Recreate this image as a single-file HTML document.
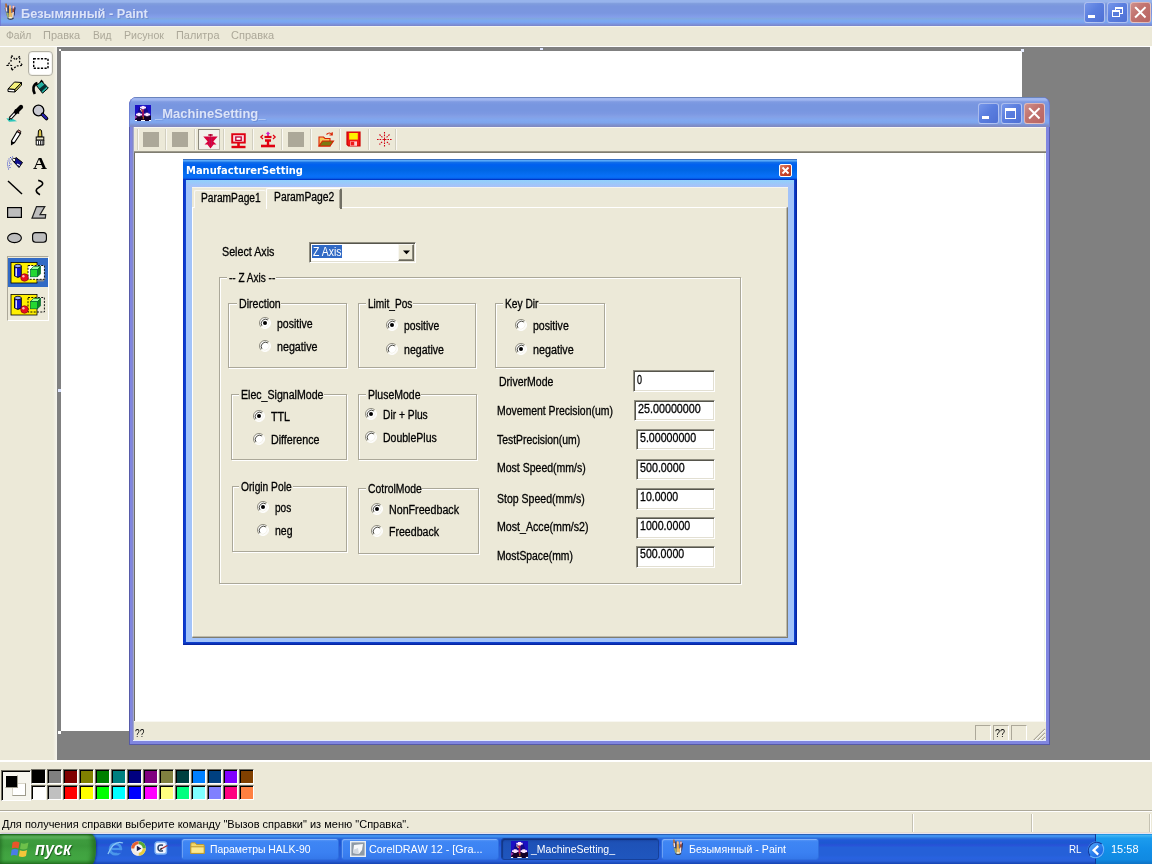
<!DOCTYPE html>
<html lang="ru"><head><meta charset="utf-8"><title>Paint</title><style>
html,body{margin:0;padding:0}
body{width:1152px;height:864px;overflow:hidden;background:#ECE9D8;position:relative;font-family:"Liberation Sans","DejaVu Sans",sans-serif}
div{position:absolute;box-sizing:border-box}
svg{position:absolute;overflow:visible}
.t{position:absolute;white-space:nowrap;line-height:16px;transform-origin:0 0}
#scr{left:0;top:0;width:1152px;height:864px;overflow:hidden;will-change:transform}
</style></head>
<body>
<div id="scr">
<div style="left:0px;top:0px;width:1152px;height:26px;background:linear-gradient(to bottom,#98B4EC 0,#98B4EC 8%,#809DDD 14%,#7A96DE 24%,#7A96E0 50%,#849FEA 66%,#80A8DE 72%,#7AA8F4 80%,#7AA4F0 86%,#7C96E0 92%,#7A84C8 100%)"></div>
<div style="left:0px;top:0px;width:1px;height:26px;background:#6C74D4;opacity:.7"></div><svg width="12" height="17" viewBox="0 0 12 17" style="left:3.6px;top:2.8px"><path d="M0.5 5 H11.5 L9.8 15.5 Q6.5 17.2 3.6 15.5 Z" fill="#5A6A9A"/><path d="M1.2 0.8 Q2.2 -.4 2.8 1 L3.6 7.5 H1.6 Z" fill="#B8682C"/><path d="M1.6 4.6 H3.2 L3.6 8.5 H2 Z" fill="#E8E0E8"/><path d="M3.4 2.5 L4.8 2.5 L5 12 L3.6 12 Z" fill="#1E3060"/><path d="M5 3 Q6 1.5 7 3 L7.4 13.5 H4.8 Z" fill="#F2B040"/><path d="M5.2 3.2 Q6 2 6.8 3.2 L6.9 5.5 H5.2 Z" fill="#F0B8A0"/><path d="M8.6 3 Q9.6 1.8 10.4 3.2 L10 11 H8.4 Z" fill="#B04826"/><path d="M8.7 3.2 Q9.6 2 10.3 3.3 L10.2 5.6 H8.6 Z" fill="#F0C8D0"/><path d="M10.5 4 L11.5 4.5 L10.5 12.5 L9.8 12.5 Z" fill="#202858"/><path d="M2 9.5 L4.6 10 L4.8 15 L3.4 14.6 Z" fill="#9CB070"/><path d="M5 10 H9 L8.6 15 H5.2 Z" fill="#E8B868"/><path d="M8.6 9 L9.8 9 L9.4 14.5 L8.4 14.5 Z" fill="#F4F0F0"/><path d="M3.6 15 Q6.5 16.4 9.6 15 L9.4 16 Q6.5 17.4 3.8 16 Z" fill="#28303C"/><path d="M4.6 14.2 Q6.4 13.4 8 14.2 L8 15.2 Q6.4 15.8 4.6 15.2 Z" fill="#F0F0D0"/></svg>
<span class="t" style="left:21.4px;top:5.5px;color:#DCE4F8;font-family:'Liberation Sans', 'DejaVu Sans', sans-serif;font-size:13px;font-weight:bold;transform:scaleX(0.9793);text-shadow:1px 1px 0 rgba(60,80,160,.25);">Безымянный - Paint</span>
<div style="left:1084px;top:2px;width:21px;height:21px;border-radius:3px;border:1px solid rgba(255,255,255,.5);background:linear-gradient(135deg,#7696EA 0,#5A7EDF 45%,#4F70D4 100%);box-shadow:0 0 0 0 #000"><div style="left:3px;top:12px;width:7px;height:3px;background:#fff"></div></div>
<div style="left:1107px;top:2px;width:21px;height:21px;border-radius:3px;border:1px solid rgba(255,255,255,.5);background:linear-gradient(135deg,#7696EA 0,#5A7EDF 45%,#4F70D4 100%);box-shadow:0 0 0 0 #000"><div style="left:7px;top:4px;width:8px;height:7px;border:1px solid #fff;border-top:2px solid #fff"></div>
<div style="left:4px;top:7px;width:8px;height:7px;border:1px solid #fff;border-top:2px solid #fff;background:#587CDC"></div></div>
<div style="left:1130px;top:2px;width:21px;height:21px;border-radius:3px;border:1px solid rgba(255,255,255,.5);background:linear-gradient(135deg,#CE908C 0,#C27470 40%,#B86462 100%);box-shadow:0 0 0 0 #000"><svg width="19" height="19" style="left:0;top:0"><path d="M4.8 4.8 L13.8 13.8 M13.8 4.8 L4.8 13.8" stroke="#fff" stroke-width="2" stroke-linecap="square" fill="none"/></svg>
</div>
<div style="left:0px;top:26px;width:1152px;height:20px;background:#ECE9D8"></div>
<div style="left:0px;top:26px;width:1152px;height:1px;background:#F3F5EF"></div><span class="t" style="left:5.6px;top:27px;color:#ACA899;font-family:'Liberation Sans', 'DejaVu Sans', sans-serif;font-size:11px;transform:scaleX(0.9391);">Файл</span>
<span class="t" style="left:43px;top:27px;color:#ACA899;font-family:'Liberation Sans', 'DejaVu Sans', sans-serif;font-size:11px;">Правка</span>
<span class="t" style="left:92.5px;top:27px;color:#ACA899;font-family:'Liberation Sans', 'DejaVu Sans', sans-serif;font-size:11px;transform:scaleX(0.9294);">Вид</span>
<span class="t" style="left:124px;top:27px;color:#ACA899;font-family:'Liberation Sans', 'DejaVu Sans', sans-serif;font-size:11px;transform:scaleX(0.9639);">Рисунок</span>
<span class="t" style="left:176px;top:27px;color:#ACA899;font-family:'Liberation Sans', 'DejaVu Sans', sans-serif;font-size:11px;transform:scaleX(0.9915);">Палитра</span>
<span class="t" style="left:231px;top:27px;color:#ACA899;font-family:'Liberation Sans', 'DejaVu Sans', sans-serif;font-size:11px;">Справка</span>
<div style="left:0px;top:46px;width:1152px;height:1px;background:#fff"></div>
<div style="left:0px;top:47px;width:57px;height:713px;background:#ECE9D8"></div>
<div style="left:57px;top:47px;width:1093px;height:713px;background:#808080"></div>
<div style="left:1150px;top:47px;width:2px;height:713px;background:#fff"></div>
<div style="left:53px;top:47px;width:4px;height:713px;background:linear-gradient(to right,#ECE9D8,#F6F5EE)"></div>
<div style="left:61px;top:51px;width:961px;height:680px;background:#fff"></div>
<div style="left:1021px;top:49px;width:3px;height:3px;background:#e8eeff"></div>
<div style="left:59px;top:49px;width:2px;height:2px;background:#fff"></div>
<div style="left:58px;top:731px;width:3px;height:3px;background:#fff"></div>
<div style="left:540px;top:48px;width:3px;height:2px;background:#dfe6ff"></div>
<div style="left:58px;top:389px;width:3px;height:3px;background:#dfe6ff"></div>
<div style="left:28px;top:51px;width:25px;height:25px;background:#fff;border:1px solid #B4B2A6;border-radius:4px;box-shadow:inset 0 0 0 1px #F4F3EE"></div><svg width="16" height="17" viewBox="0 0 16 17" style="left:7px;top:54px"><path d="M4.6 1.3 L8.3 5.9 L12.9 2.2 L12.5 8 L15.7 11.4 L9.5 12 L4.6 16.5 L4.5 11.5 L0.3 11.4 L4 7 Z" fill="none" stroke="#000" stroke-width="1.25" stroke-dasharray="1.8 1.5"/></svg>
<svg width="16" height="11" viewBox="0 0 16 11" style="left:33px;top:58px"><rect x=".7" y=".7" width="14.3" height="9.6" fill="none" stroke="#000" stroke-width="1.4" stroke-dasharray="2.2 1.4"/></svg>
<svg width="16" height="12" viewBox="0 0 16 12" style="left:7px;top:81px"><path d="M1 8 L7.5 1 L14.5 1.5 L8 8.5 Z" fill="#F4F27C" stroke="#000" stroke-width="1"/><path d="M1 8 L8 8.5 L8 11 L1 10.5 Z" fill="#fff" stroke="#000" stroke-width="1"/><path d="M8 8.5 L14.5 1.5 L14.5 4 L8 11 Z" fill="#E2DF62" stroke="#000" stroke-width="1"/></svg>
<svg width="17" height="15" viewBox="0 0 17 15" style="left:32px;top:80px"><path d="M2.8 14 C0.3 9 1 4.5 5.5 3" fill="none" stroke="#000" stroke-width="2.6"/><path d="M4.5 5.5 L9.5 1.2 L16.3 8 L10.5 13.2 Z" fill="#22B0A2" stroke="#000" stroke-width="1"/><path d="M7 9 L13 4 L15 6.5 L9.5 11.5 Z" fill="#042E30"/><path d="M8 2.5 L9.5 0.3 L11.5 2.5" fill="none" stroke="#000" stroke-width="1.1"/></svg>
<svg width="18" height="17" viewBox="0 0 18 17" style="left:6px;top:105px"><path d="M0.3 13.2 L6 13.5 L11 16.3 L3 16.8 Z" fill="#2CC6BA"/><path d="M4 13.5 L11 6" stroke="#000" stroke-width="3.4"/><path d="M4.3 13.2 L10.5 6.5" stroke="#fff" stroke-width="1.4"/><path d="M10 7 L15 2" stroke="#000" stroke-width="4.2" stroke-linecap="round"/><path d="M9 4.5 L13 8.5" stroke="#000" stroke-width="1.6"/><path d="M3 14.8 L4.5 13" stroke="#000" stroke-width="1.2"/></svg>
<svg width="17" height="17" viewBox="0 0 17 17" style="left:32px;top:104px"><circle cx="6.5" cy="6.5" r="5.3" fill="#C9C9D0" stroke="#000" stroke-width="1.3"/><path d="M10.5 10.5 L14.5 14.5" stroke="#000" stroke-width="3.6" stroke-linecap="round"/><path d="M10.8 10.8 L14.3 14.3" stroke="#2520B0" stroke-width="2" stroke-linecap="round"/></svg>
<svg width="12" height="17" viewBox="0 0 12 17" style="left:10px;top:129px"><path d="M7 2.5 L10.5 4.5 L4.5 13.5 L1.5 15.5 L1.5 12 Z" fill="#fff" stroke="#000" stroke-width="1.1"/><path d="M1.5 12 L4.5 13.5 L1.5 15.8 Z" fill="#000"/><path d="M7.3 2.3 L8.3 .8 L11 2.5 L10.3 4.2 Z" fill="#E09088" stroke="#000" stroke-width=".8"/></svg>
<svg width="10" height="17" viewBox="0 0 10 17" style="left:35px;top:129px"><path d="M3.5 1.5 Q5 -.5 6.5 1.5 L7 8 H3 Z" fill="#D8C24A" stroke="#000" stroke-width="1"/><rect x="1.2" y="8" width="7.6" height="3.2" fill="#E8E4C8" stroke="#000" stroke-width="1"/><path d="M1.2 11.2 H8.8 V16 H1.2 Z" fill="#fff" stroke="#000" stroke-width="1"/><path d="M3.5 12 V16 M5.5 12 V16 M7.2 12 V16" stroke="#000" stroke-width=".8"/></svg>
<svg width="18" height="15" viewBox="0 0 18 15" style="left:6px;top:155px"><path d="M7 6 L10 2.5 L16.5 7.5 L13 12.5 Z" fill="#10108C" stroke="#000" stroke-width="1"/><path d="M6 4.5 L8 3 L10 5 L8 7 Z" fill="#fff" stroke="#000" stroke-width=".8"/><path d="M11 9 L14 10.5" stroke="#fff" stroke-width="1.2"/><g fill="#3A4AD0"><rect x="4" y="2" width="1" height="1"/><rect x="2.5" y="3.5" width="1" height="1"/><rect x="5" y="3.5" width="1" height="1"/><rect x="1.5" y="5.5" width="1" height="1"/><rect x="3.5" y="5.5" width="1" height="1"/><rect x="1" y="7.5" width="1" height="1"/><rect x="3" y="7.5" width="1" height="1"/><rect x="4.5" y="8.5" width="1" height="1"/><rect x="1" y="9.5" width="1" height="1"/><rect x="2.8" y="10" width="1" height="1"/><rect x="1.5" y="11.5" width="1" height="1"/><rect x="3.5" y="12" width="1" height="1"/><rect x="2" y="13.5" width="1" height="1"/><rect x="6" y="1.5" width="1" height="1"/></g></svg>
<span class="t" style="left:32.5px;top:154.6px;color:#000;font-family:'Liberation Serif', serif;font-size:17.5px;font-weight:bold;transform:scaleX(1.1075);">A</span>
<svg width="16" height="15" viewBox="0 0 16 15" style="left:7px;top:180px"><path d="M1 1 L15 14" stroke="#000" stroke-width="1.5"/></svg>
<svg width="10" height="16" viewBox="0 0 10 16" style="left:34px;top:180px"><path d="M4.2 .4 C7 1 9.6 2.6 8.4 4.6 C7 7 2.2 8 2.2 10.3 C2.2 12.5 4 13.8 6 14.7" fill="none" stroke="#000" stroke-width="1.6"/></svg>
<svg width="15" height="11" viewBox="0 0 15 11" style="left:7px;top:207px"><rect x=".6" y=".6" width="13.8" height="9.8" fill="#BDBDBD" stroke="#000" stroke-width="1.2"/></svg>
<svg width="16" height="13" viewBox="0 0 16 13" style="left:31px;top:206px"><path d="M5.5 .6 H13.8 L9 8.6 H14.7 L14.3 12.2 H1 Z" fill="#BDBDBD" stroke="#222" stroke-width="1.2"/></svg>
<svg width="16" height="12" viewBox="0 0 16 12" style="left:7px;top:232px"><ellipse cx="7.5" cy="6" rx="6.9" ry="4.6" fill="#BDBDBD" stroke="#000" stroke-width="1.1"/></svg>
<svg width="15" height="11" viewBox="0 0 15 11" style="left:32px;top:232px"><rect x=".6" y=".6" width="13.8" height="9.6" rx="3" fill="#BDBDBD" stroke="#000" stroke-width="1.1"/></svg>
<div style="left:7px;top:256px;width:42px;height:65px;background:#ECE9D8;border-top:1px solid #ACA899;border-left:1px solid #ACA899;border-right:1px solid #fff;border-bottom:1px solid #fff"></div>
<div style="left:8px;top:258px;width:40px;height:29px;background:#316AC5"></div><svg width="36" height="24" viewBox="0 0 36 24" style="left:10px;top:261px"><rect x="1" y="1.5" width="26" height="20.5" fill="#FFEF00" stroke="#000" stroke-width=".8"/><path d="M4.5 5 V15 Q8 17.8 11.3 15 V5 Z" fill="#1414D0" stroke="#000" stroke-width=".9"/><ellipse cx="7.9" cy="5" rx="3.4" ry="1.7" fill="#9AA8FF" stroke="#000" stroke-width=".8"/><path d="M6.2 7.2 V15.3" stroke="#fff" stroke-width="1.3"/><path d="M30 17 L36 17 L33.5 20.5 L26 20.5 Z" fill="#8a8a8a"/><rect x="18" y="4.5" width="16.4" height="13.8" fill="#fff" stroke="#000" stroke-width=".9" stroke-dasharray="2 1.3"/><circle cx="14.5" cy="16.5" r="3.8" fill="#E81020" stroke="#7a0010" stroke-width=".6"/><circle cx="13.4" cy="15.2" r="1.2" fill="#FFB8B8"/><path d="M20.5 8.5 L23.5 5.5 H30.5 L27.5 8.5 Z" fill="#98FF98" stroke="#063" stroke-width=".7"/><path d="M27.5 8.5 L30.5 5.5 V12.8 L27.5 15.8 Z" fill="#0A8A1A" stroke="#063" stroke-width=".7"/><rect x="20.5" y="8.5" width="7" height="7.3" fill="#22D832" stroke="#063" stroke-width=".7"/></svg>
<svg width="36" height="24" viewBox="0 0 36 24" style="left:10px;top:293px"><rect x="1" y="1.5" width="26" height="20.5" fill="#FFEF00" stroke="#000" stroke-width=".8"/><path d="M4.5 5 V15 Q8 17.8 11.3 15 V5 Z" fill="#1414D0" stroke="#000" stroke-width=".9"/><ellipse cx="7.9" cy="5" rx="3.4" ry="1.7" fill="#9AA8FF" stroke="#000" stroke-width=".8"/><path d="M6.2 7.2 V15.3" stroke="#fff" stroke-width="1.3"/><rect x="18" y="4.5" width="16.4" height="14.5" fill="none" stroke="#000" stroke-width=".9" stroke-dasharray="2 1.3"/><circle cx="14.5" cy="16.5" r="3.8" fill="#E81020" stroke="#7a0010" stroke-width=".6"/><circle cx="13.4" cy="15.2" r="1.2" fill="#FFB8B8"/><path d="M20.5 8.5 L23.5 5.5 H30.5 L27.5 8.5 Z" fill="#98FF98" stroke="#063" stroke-width=".7"/><path d="M27.5 8.5 L30.5 5.5 V12.8 L27.5 15.8 Z" fill="#0A8A1A" stroke="#063" stroke-width=".7"/><rect x="20.5" y="8.5" width="7" height="7.3" fill="#22D832" stroke="#063" stroke-width=".7"/></svg>
<div style="left:129px;top:97px;width:921px;height:648px;background:#8086E0;border-radius:8px 8px 0 0;border:1px solid #565AA8;border-top:none"></div>
<div style="left:132px;top:127px;width:1px;height:614px;background:#8488CC"></div>
<div style="left:133px;top:127px;width:1px;height:614px;background:#A2A8D0"></div>
<div style="left:129px;top:97px;width:921px;height:30px;border-radius:8px 8px 0 0;background:linear-gradient(to bottom,#6A84BC 0,#6A84BC 3.3%,#A0B6F0 5%,#A0B6F0 10%,#7F9BE2 16%,#7896E0 26%,#7896E0 45%,#7C98E2 55%,#84A0E6 65%,#80A8F0 78%,#7EA4EC 86%,#7E90CC 94%,#8088C0 100%);border-left:1px solid #6C7FD2;border-right:1px solid #6C7FD2"></div><svg width="16" height="16" viewBox="0 0 16 16" style="left:135px;top:105px"><rect width="16" height="16" fill="#1A10C4"/><path d="M4.5 2 H11.5 L16 14 V16 H0 V14 Z" fill="#0E0658" opacity=".55"/><rect y="10.6" width="16" height="5.4" fill="#12001E" opacity=".92"/><path d="M0 10.5 L2.5 12 L0 14 Z" fill="#C040D0" opacity=".8"/><path d="M8 3.5 V12" stroke="#B01060" stroke-width="1.7"/><path d="M6.2 4.5 L7.6 7" stroke="#8A1030" stroke-width="1.4"/><path d="M8.3 11.5 V14.2" stroke="#C86410" stroke-width="1.1"/><g fill="#FFE6FF"><rect x="5" y="1.7" width="6" height="1.7"/><rect x="6.6" y=".9" width="2.9" height="3.3"/><rect x="1" y="8.7" width="6" height="1.7"/><rect x="2.5" y="7.8" width="2.9" height="3.4"/><rect x="9.1" y="8.7" width="6" height="1.7"/><rect x="10.6" y="7.8" width="2.9" height="3.4"/></g><rect x="5" y="4" width="1.2" height="1.2" fill="#FFE4C8"/><rect x="6.1" y="5.3" width="1.2" height="1.2" fill="#FFD890"/><g fill="#fff"><rect x="0" y="15" width="2" height="1"/><rect x="6" y="15" width="4" height="1"/><rect x="14" y="15" width="2" height="1"/></g></svg>
<span class="t" style="left:155px;top:106.3px;color:#DCE4F8;font-family:'Liberation Sans', 'DejaVu Sans', sans-serif;font-size:13px;font-weight:bold;text-shadow:1px 1px 0 rgba(60,80,160,.25);">_MachineSetting_</span>
<div style="left:978px;top:103px;width:21px;height:21px;border-radius:3px;border:1px solid rgba(255,255,255,.5);background:linear-gradient(135deg,#7696EA 0,#5A7EDF 45%,#4F70D4 100%);box-shadow:0 0 0 0 #000"><div style="left:3px;top:12px;width:7px;height:3px;background:#fff"></div></div>
<div style="left:1001px;top:103px;width:21px;height:21px;border-radius:3px;border:1px solid rgba(255,255,255,.5);background:linear-gradient(135deg,#7696EA 0,#5A7EDF 45%,#4F70D4 100%);box-shadow:0 0 0 0 #000"><div style="left:3px;top:4px;width:11px;height:11px;border:1px solid #fff;border-top:3px solid #fff"></div></div>
<div style="left:1024px;top:103px;width:21px;height:21px;border-radius:3px;border:1px solid rgba(255,255,255,.5);background:linear-gradient(135deg,#CE908C 0,#C27470 40%,#B86462 100%);box-shadow:0 0 0 0 #000"><svg width="19" height="19" style="left:0;top:0"><path d="M4.8 4.8 L13.8 13.8 M13.8 4.8 L4.8 13.8" stroke="#fff" stroke-width="2" stroke-linecap="square" fill="none"/></svg>
</div>
<div style="left:134px;top:127px;width:912px;height:25px;background:#ECE9D8"></div>
<div style="left:134px;top:127px;width:912px;height:1px;background:#F8F7F1"></div>
<div style="left:134px;top:151px;width:912px;height:2px;background:linear-gradient(#ACA899,#716F64)"></div>
<div style="left:137px;top:129px;width:1px;height:21px;background:#D2CFC0"></div>
<div style="left:138px;top:129px;width:1px;height:21px;background:#FAF9F4"></div>
<div style="left:165px;top:129px;width:1px;height:21px;background:#D2CFC0"></div>
<div style="left:166px;top:129px;width:1px;height:21px;background:#FAF9F4"></div>
<div style="left:194px;top:129px;width:1px;height:21px;background:#D2CFC0"></div>
<div style="left:195px;top:129px;width:1px;height:21px;background:#FAF9F4"></div>
<div style="left:223px;top:129px;width:1px;height:21px;background:#D2CFC0"></div>
<div style="left:224px;top:129px;width:1px;height:21px;background:#FAF9F4"></div>
<div style="left:252px;top:129px;width:1px;height:21px;background:#D2CFC0"></div>
<div style="left:253px;top:129px;width:1px;height:21px;background:#FAF9F4"></div>
<div style="left:281px;top:129px;width:1px;height:21px;background:#D2CFC0"></div>
<div style="left:282px;top:129px;width:1px;height:21px;background:#FAF9F4"></div>
<div style="left:310px;top:129px;width:1px;height:21px;background:#D2CFC0"></div>
<div style="left:311px;top:129px;width:1px;height:21px;background:#FAF9F4"></div>
<div style="left:339px;top:129px;width:1px;height:21px;background:#D2CFC0"></div>
<div style="left:340px;top:129px;width:1px;height:21px;background:#FAF9F4"></div>
<div style="left:368px;top:129px;width:1px;height:21px;background:#D2CFC0"></div>
<div style="left:369px;top:129px;width:1px;height:21px;background:#FAF9F4"></div>
<div style="left:395px;top:129px;width:1px;height:21px;background:#D2CFC0"></div>
<div style="left:396px;top:129px;width:1px;height:21px;background:#FAF9F4"></div>
<div style="left:143px;top:132px;width:16px;height:15px;background:#ACA899"></div>
<div style="left:172px;top:132px;width:16px;height:15px;background:#ACA899"></div>
<div style="left:288px;top:132px;width:16px;height:15px;background:#ACA899"></div>
<div style="left:198px;top:129px;width:22px;height:21px;background:#F3F2EC;border:1px solid #B9B6A8;border-top-color:#8C8A7E;border-left-color:#8C8A7E"></div><svg width="15" height="15" viewBox="0 0 15 15" style="left:203px;top:133.5px"><path d="M5.3 1 H9.7 M7.5 0 V2.6" stroke="#B00030" stroke-width="1.3"/><path d="M0.3 2.6 H14.7 L10.3 7.5 L13.5 10.6 H10.6 L7.5 14.6 L4.4 10.6 H1.5 L4.7 7.5 Z" fill="#D8003C"/><path d="M6.5 3.5 V12 M8.5 3.5 V12" stroke="#A03070" stroke-width=".8" stroke-dasharray="1 1"/></svg>
<svg width="15" height="16" viewBox="0 0 15 16" style="left:231px;top:132.6px"><rect x="1.2" y="1.2" width="12.6" height="8.4" fill="#F8D8E0" stroke="#E00010" stroke-width="1.9"/><rect x="4.8" y="4" width="5.4" height="3.4" fill="#fff" stroke="#C00030" stroke-width="1.3"/><path d="M7.5 10 V13" stroke="#E00010" stroke-width="2.6"/><path d="M0.5 14 H14.5" stroke="#E00010" stroke-width="2.4"/></svg>
<svg width="16" height="17" viewBox="0 0 16 17" style="left:260px;top:131px"><path d="M3 4 L0.8 6 L3 8 M13 4 L15.2 6 L13 8" fill="none" stroke="#E00010" stroke-width="1.2"/><path d="M8 .5 L5.8 3 H10.2 Z" fill="#D020C0"/><path d="M8 2.5 V7" stroke="#D020C0" stroke-width="1.8"/><path d="M4.5 6 H11.5" stroke="#E00010" stroke-width="2.2"/><path d="M5 9.5 H11 M8 9 V14" stroke="#E00010" stroke-width="2.4"/><path d="M1 15 H15" stroke="#E00010" stroke-width="2.6"/></svg>
<svg width="16" height="17" viewBox="0 0 16 17" style="left:318px;top:131px"><path d="M1 6 H5.5 L7 7.5 H12 V15 H1 Z" fill="#F6C860" stroke="#D82000" stroke-width="1.1"/><path d="M1 15 L4.5 10 H15.5 L12 15 Z" fill="#7A7A10" stroke="#D82000" stroke-width="1.1"/><path d="M8.5 3.5 Q11.5 0.5 14 3.5 M14.2 1.2 V4 H11.5" fill="none" stroke="#D82000" stroke-width="1.2"/></svg>
<svg width="15" height="16" viewBox="0 0 15 16" style="left:346px;top:131px"><path d="M1 1 H14 V15 H2.5 L1 13.5 Z" fill="#F01818" stroke="#D00000" stroke-width="1.2"/><rect x="3.2" y="2" width="8.6" height="6.6" fill="#FFF000"/><rect x="4" y="10.4" width="7" height="4.4" fill="#FFD0D0"/><rect x="4.6" y="10.8" width="3.6" height="3.6" fill="#F01818"/></svg>
<svg width="15" height="15" viewBox="0 0 15 15" style="left:377px;top:132px"><g stroke="#D00010" stroke-width="1.1" stroke-dasharray="1.6 1"><path d="M7.5 0 V15 M0 7.5 H15"/><path d="M2.5 2.5 L12.5 12.5 M12.5 2.5 L2.5 12.5"/></g><circle cx="7.5" cy="7.5" r="2.6" fill="#ECE9D8"/><path d="M7.5 5.5 V9.5 M5.5 7.5 H9.5" stroke="#D00010" stroke-width=".9"/></svg>
<div style="left:134px;top:153px;width:912px;height:568px;background:#ECE9D8"></div>
<div style="left:134px;top:153px;width:1px;height:568px;background:#716F64"></div>
<div style="left:135px;top:153px;width:909px;height:568px;background:#fff"></div>
<div style="left:134px;top:721px;width:912px;height:20px;background:#ECE9D8"></div>
<div style="left:134px;top:721px;width:912px;height:1px;background:#F8F7F1"></div><span class="t" style="left:135px;top:724.5px;color:#000;font-family:'Liberation Sans', 'DejaVu Sans', sans-serif;font-size:11px;transform:scaleX(0.7592);">??</span>
<div style="left:975px;top:725px;width:16px;height:16px;border-top:1px solid #ACA899;border-left:1px solid #ACA899;border-right:1px solid #fff"></div>
<div style="left:993px;top:725px;width:16px;height:16px;border-top:1px solid #ACA899;border-left:1px solid #ACA899;border-right:1px solid #fff"></div><span class="t" style="left:995px;top:724.5px;color:#000;font-family:'Liberation Sans', 'DejaVu Sans', sans-serif;font-size:11px;transform:scaleX(0.8163);">??</span>
<div style="left:1011px;top:725px;width:16px;height:16px;border-top:1px solid #ACA899;border-left:1px solid #ACA899;border-right:1px solid #fff"></div><svg width="13" height="13" viewBox="0 0 13 13" style="left:1032px;top:728px"><path d="M1 13 L13 1 M5 13 L13 5 M9 13 L13 9" stroke="#ACA899" stroke-width="1.3"/><path d="M2 13 L13 2 M6 13 L13 6 M10 13 L13 10" stroke="#fff" stroke-width=".8"/></svg>
<div style="left:133px;top:740px;width:913px;height:1px;background:#E4ECFF"></div>
<div style="left:1044px;top:153px;width:1px;height:568px;background:#ECF4E4"></div>
<div style="left:1045px;top:153px;width:1px;height:568px;background:#FAFFFF"></div>
<div style="left:183px;top:159px;width:614px;height:486px;background:#0A2FC2"></div>
<div style="left:183px;top:159px;width:614px;height:21px;background:linear-gradient(to bottom,#3A70C0 0,#3A70C0 4.8%,#58A8F8 5%,#58A8F8 9.5%,#1470E8 15%,#0060F0 27%,#0066E4 52%,#0870F8 82%,#0868F0 92%,#0038C8 95.2%,#0038C8 100%)"></div>
<div style="left:183px;top:180px;width:3px;height:465px;background:linear-gradient(to right,#0A2FC2,#0F46D6)"></div>
<div style="left:794px;top:180px;width:3px;height:465px;background:linear-gradient(to left,#061F9A,#0F46D6)"></div>
<div style="left:183px;top:642px;width:614px;height:3px;background:linear-gradient(to top,#061F9A,#0F46D6)"></div><span class="t" style="left:185.6px;top:163.2px;color:#fff;font-family:'DejaVu Sans', 'Liberation Sans', sans-serif;font-size:11px;font-weight:bold;transform:scaleX(0.9031);">ManufacturerSetting</span>
<div style="left:779px;top:164px;width:13px;height:13px;border:1px solid #fff;border-radius:2px;background:linear-gradient(135deg,#E08466 0,#C8432A 55%,#B03A1E 100%)"><svg width="11" height="11" style="left:0;top:0"><path d="M2.5 2.5 L8.5 8.5 M8.5 2.5 L2.5 8.5" stroke="#fff" stroke-width="1.9" fill="none"/></svg>
</div>
<div style="left:186px;top:180px;width:608px;height:462px;background:#A2C3F9"></div>
<div style="left:186px;top:180px;width:608px;height:7px;background:linear-gradient(to bottom,#90D0FC,#A8C0F8)"></div>
<div style="left:192px;top:187px;width:596px;height:451px;background:#ECE9D8"></div>
<div style="left:192px;top:187px;width:596px;height:1px;background:#F6F5F0"></div>
<div style="left:192px;top:207px;width:596px;height:431px;border-top:1px solid #fff;border-left:1px solid #fff;border-right:2px solid;border-right-color:#7E7C70;border-bottom:2px solid #7E7C70"></div>
<div style="left:193px;top:636px;width:593px;height:1px;background:#BDBAAB"></div>
<div style="left:786px;top:208px;width:1px;height:429px;background:#BDBAAB"></div>
<div style="left:194px;top:190px;width:72px;height:18px;border-top:1px solid #FAF9F5;border-left:1px solid #FAF9F5;border-radius:2px 2px 0 0;background:#ECE9D8"></div><span class="t" style="left:200.7px;top:190.3px;color:#000;font-family:'Liberation Sans', 'DejaVu Sans', sans-serif;font-size:12px;transform:scaleX(0.8523);-webkit-text-stroke:.3px #000;">ParamPage1</span>
<div style="left:266px;top:188px;width:76px;height:21px;background:#ECE9D8;border-top:1px solid #fff;border-left:1px solid #fff;border-right:2px solid #716F64;border-radius:2px 2px 0 0"></div>
<div style="left:339px;top:190px;width:1px;height:18px;background:#ACA899"></div><span class="t" style="left:273.7px;top:188.8px;color:#000;font-family:'Liberation Sans', 'DejaVu Sans', sans-serif;font-size:12px;transform:scaleX(0.8609);-webkit-text-stroke:.3px #000;">ParamPage2</span>
<span class="t" style="left:222px;top:244px;color:#000;font-family:'Liberation Sans', 'DejaVu Sans', sans-serif;font-size:12px;transform:scaleX(0.8926);-webkit-text-stroke:.3px #000;">Select Axis</span>
<div style="left:309px;top:242px;width:107px;height:21px;background:#fff;border:1px solid;border-color:#8F8D80 #fff #fff #8F8D80;box-shadow:inset 1px 1px 0 #56554C, inset -1px -1px 0 #E2DFD2"></div>
<div style="left:312px;top:245px;width:30px;height:13px;background:#316AC5"></div><span class="t" style="left:312.5px;top:244px;color:#fff;font-family:'Liberation Sans', 'DejaVu Sans', sans-serif;font-size:12px;transform:scaleX(0.8723);">Z Axis</span>
<div style="left:398px;top:244px;width:16px;height:17px;background:#ECE9D8;border:1px solid;border-color:#F8F7F2 #6A685C #6A685C #F8F7F2;box-shadow:inset -1px -1px 0 #8F8D80"><svg width="14" height="15" style="left:0;top:0"><path d="M4 5.6 H11 L7.5 9.3 Z" fill="#000"/></svg>
</div>
<div style="left:219px;top:277px;width:522px;height:307px;border:1px solid #ABA899;box-shadow:1px 1px 0 #fff, inset 1px 1px 0 #fff"></div>
<div style="left:226.75px;top:271px;width:49.25px;height:14px;background:#ECE9D8"></div><span class="t" style="left:228.75px;top:269.9px;color:#000;font-family:'Liberation Sans', 'DejaVu Sans', sans-serif;font-size:12px;transform:scaleX(0.8359);-webkit-text-stroke:.3px #000;">-- Z Axis --</span>
<div style="left:228px;top:303px;width:119px;height:65px;border:1px solid #ABA899;box-shadow:1px 1px 0 #fff, inset 1px 1px 0 #fff"></div>
<div style="left:236.5px;top:297px;width:44.75px;height:14px;background:#ECE9D8"></div><span class="t" style="left:238.5px;top:295.75px;color:#000;font-family:'Liberation Sans', 'DejaVu Sans', sans-serif;font-size:12px;transform:scaleX(0.8816);-webkit-text-stroke:.3px #000;">Direction</span>
<div style="left:358px;top:303px;width:118px;height:65px;border:1px solid #ABA899;box-shadow:1px 1px 0 #fff, inset 1px 1px 0 #fff"></div>
<div style="left:365.5px;top:297px;width:47.4px;height:14px;background:#ECE9D8"></div><span class="t" style="left:367.5px;top:295.75px;color:#000;font-family:'Liberation Sans', 'DejaVu Sans', sans-serif;font-size:12px;transform:scaleX(0.8427);-webkit-text-stroke:.3px #000;">Limit_Pos</span>
<div style="left:495px;top:303px;width:110px;height:65px;border:1px solid #ABA899;box-shadow:1px 1px 0 #fff, inset 1px 1px 0 #fff"></div>
<div style="left:502.5px;top:297px;width:36.4px;height:14px;background:#ECE9D8"></div><span class="t" style="left:504.5px;top:295.75px;color:#000;font-family:'Liberation Sans', 'DejaVu Sans', sans-serif;font-size:12px;transform:scaleX(0.8489);-webkit-text-stroke:.3px #000;">Key Dir</span>
<div style="left:231px;top:394px;width:116px;height:66px;border:1px solid #ABA899;box-shadow:1px 1px 0 #fff, inset 1px 1px 0 #fff"></div>
<div style="left:238.5px;top:388px;width:85.5px;height:14px;background:#ECE9D8"></div><span class="t" style="left:240.5px;top:387px;color:#000;font-family:'Liberation Sans', 'DejaVu Sans', sans-serif;font-size:12px;transform:scaleX(0.8832);-webkit-text-stroke:.3px #000;">Elec_SignalMode</span>
<div style="left:358px;top:394px;width:119px;height:66px;border:1px solid #ABA899;box-shadow:1px 1px 0 #fff, inset 1px 1px 0 #fff"></div>
<div style="left:365.5px;top:388px;width:55.5px;height:14px;background:#ECE9D8"></div><span class="t" style="left:367.5px;top:387px;color:#000;font-family:'Liberation Sans', 'DejaVu Sans', sans-serif;font-size:12px;transform:scaleX(0.8743);-webkit-text-stroke:.3px #000;">PluseMode</span>
<div style="left:232px;top:486px;width:115px;height:66px;border:1px solid #ABA899;box-shadow:1px 1px 0 #fff, inset 1px 1px 0 #fff"></div>
<div style="left:239.4px;top:480px;width:53.6px;height:14px;background:#ECE9D8"></div><span class="t" style="left:241.4px;top:478.75px;color:#000;font-family:'Liberation Sans', 'DejaVu Sans', sans-serif;font-size:12px;transform:scaleX(0.8522);-webkit-text-stroke:.3px #000;">Origin Pole</span>
<div style="left:358px;top:488px;width:121px;height:66px;border:1px solid #ABA899;box-shadow:1px 1px 0 #fff, inset 1px 1px 0 #fff"></div>
<div style="left:365.5px;top:482px;width:56.75px;height:14px;background:#ECE9D8"></div><span class="t" style="left:367.5px;top:480.5px;color:#000;font-family:'Liberation Sans', 'DejaVu Sans', sans-serif;font-size:12px;transform:scaleX(0.8665);-webkit-text-stroke:.3px #000;">CotrolMode</span>
<svg width="12" height="12" viewBox="0 0 12 12" style="left:259px;top:317px"><circle cx="6" cy="6" r="5.2" fill="#fff"/><path d="M2.1 9.9 A5.5 5.5 0 0 1 9.9 2.1" fill="none" stroke="#8E8C80" stroke-width="1"/><path d="M3 9 A4.3 4.3 0 0 1 9 3" fill="none" stroke="#4A4942" stroke-width="1"/><path d="M9.9 2.1 A5.5 5.5 0 0 1 2.1 9.9" fill="none" stroke="#fff" stroke-width="1"/><path d="M9.1 2.9 A4.4 4.4 0 0 1 2.9 9.1" fill="none" stroke="#F2F0E6" stroke-width=".9"/><circle cx="6" cy="6" r="2" fill="#000"/></svg>
<span class="t" style="left:276.5px;top:315.75px;color:#000;font-family:'Liberation Sans', 'DejaVu Sans', sans-serif;font-size:12px;transform:scaleX(0.8774);-webkit-text-stroke:.3px #000;">positive</span>
<svg width="12" height="12" viewBox="0 0 12 12" style="left:259px;top:340px"><circle cx="6" cy="6" r="5.2" fill="#fff"/><path d="M2.1 9.9 A5.5 5.5 0 0 1 9.9 2.1" fill="none" stroke="#8E8C80" stroke-width="1"/><path d="M3 9 A4.3 4.3 0 0 1 9 3" fill="none" stroke="#4A4942" stroke-width="1"/><path d="M9.9 2.1 A5.5 5.5 0 0 1 2.1 9.9" fill="none" stroke="#fff" stroke-width="1"/><path d="M9.1 2.9 A4.4 4.4 0 0 1 2.9 9.1" fill="none" stroke="#F2F0E6" stroke-width=".9"/></svg>
<span class="t" style="left:276.5px;top:338.6px;color:#000;font-family:'Liberation Sans', 'DejaVu Sans', sans-serif;font-size:12px;transform:scaleX(0.8926);-webkit-text-stroke:.3px #000;">negative</span>
<svg width="12" height="12" viewBox="0 0 12 12" style="left:386px;top:319px"><circle cx="6" cy="6" r="5.2" fill="#fff"/><path d="M2.1 9.9 A5.5 5.5 0 0 1 9.9 2.1" fill="none" stroke="#8E8C80" stroke-width="1"/><path d="M3 9 A4.3 4.3 0 0 1 9 3" fill="none" stroke="#4A4942" stroke-width="1"/><path d="M9.9 2.1 A5.5 5.5 0 0 1 2.1 9.9" fill="none" stroke="#fff" stroke-width="1"/><path d="M9.1 2.9 A4.4 4.4 0 0 1 2.9 9.1" fill="none" stroke="#F2F0E6" stroke-width=".9"/><circle cx="6" cy="6" r="2" fill="#000"/></svg>
<span class="t" style="left:403.75px;top:317.75px;color:#000;font-family:'Liberation Sans', 'DejaVu Sans', sans-serif;font-size:12px;transform:scaleX(0.8664);-webkit-text-stroke:.3px #000;">positive</span>
<svg width="12" height="12" viewBox="0 0 12 12" style="left:386px;top:343px"><circle cx="6" cy="6" r="5.2" fill="#fff"/><path d="M2.1 9.9 A5.5 5.5 0 0 1 9.9 2.1" fill="none" stroke="#8E8C80" stroke-width="1"/><path d="M3 9 A4.3 4.3 0 0 1 9 3" fill="none" stroke="#4A4942" stroke-width="1"/><path d="M9.9 2.1 A5.5 5.5 0 0 1 2.1 9.9" fill="none" stroke="#fff" stroke-width="1"/><path d="M9.1 2.9 A4.4 4.4 0 0 1 2.9 9.1" fill="none" stroke="#F2F0E6" stroke-width=".9"/></svg>
<span class="t" style="left:403.75px;top:341.5px;color:#000;font-family:'Liberation Sans', 'DejaVu Sans', sans-serif;font-size:12px;transform:scaleX(0.8815);-webkit-text-stroke:.3px #000;">negative</span>
<svg width="12" height="12" viewBox="0 0 12 12" style="left:515px;top:319px"><circle cx="6" cy="6" r="5.2" fill="#fff"/><path d="M2.1 9.9 A5.5 5.5 0 0 1 9.9 2.1" fill="none" stroke="#8E8C80" stroke-width="1"/><path d="M3 9 A4.3 4.3 0 0 1 9 3" fill="none" stroke="#4A4942" stroke-width="1"/><path d="M9.9 2.1 A5.5 5.5 0 0 1 2.1 9.9" fill="none" stroke="#fff" stroke-width="1"/><path d="M9.1 2.9 A4.4 4.4 0 0 1 2.9 9.1" fill="none" stroke="#F2F0E6" stroke-width=".9"/></svg>
<span class="t" style="left:532.5px;top:317.75px;color:#000;font-family:'Liberation Sans', 'DejaVu Sans', sans-serif;font-size:12px;transform:scaleX(0.8786);-webkit-text-stroke:.3px #000;">positive</span>
<svg width="12" height="12" viewBox="0 0 12 12" style="left:515px;top:343px"><circle cx="6" cy="6" r="5.2" fill="#fff"/><path d="M2.1 9.9 A5.5 5.5 0 0 1 9.9 2.1" fill="none" stroke="#8E8C80" stroke-width="1"/><path d="M3 9 A4.3 4.3 0 0 1 9 3" fill="none" stroke="#4A4942" stroke-width="1"/><path d="M9.9 2.1 A5.5 5.5 0 0 1 2.1 9.9" fill="none" stroke="#fff" stroke-width="1"/><path d="M9.1 2.9 A4.4 4.4 0 0 1 2.9 9.1" fill="none" stroke="#F2F0E6" stroke-width=".9"/><circle cx="6" cy="6" r="2" fill="#000"/></svg>
<span class="t" style="left:532.5px;top:341.5px;color:#000;font-family:'Liberation Sans', 'DejaVu Sans', sans-serif;font-size:12px;transform:scaleX(0.8981);-webkit-text-stroke:.3px #000;">negative</span>
<svg width="12" height="12" viewBox="0 0 12 12" style="left:253px;top:410px"><circle cx="6" cy="6" r="5.2" fill="#fff"/><path d="M2.1 9.9 A5.5 5.5 0 0 1 9.9 2.1" fill="none" stroke="#8E8C80" stroke-width="1"/><path d="M3 9 A4.3 4.3 0 0 1 9 3" fill="none" stroke="#4A4942" stroke-width="1"/><path d="M9.9 2.1 A5.5 5.5 0 0 1 2.1 9.9" fill="none" stroke="#fff" stroke-width="1"/><path d="M9.1 2.9 A4.4 4.4 0 0 1 2.9 9.1" fill="none" stroke="#F2F0E6" stroke-width=".9"/><circle cx="6" cy="6" r="2" fill="#000"/></svg>
<span class="t" style="left:271px;top:408.9px;color:#000;font-family:'Liberation Sans', 'DejaVu Sans', sans-serif;font-size:12px;transform:scaleX(0.8949);-webkit-text-stroke:.3px #000;">TTL</span>
<svg width="12" height="12" viewBox="0 0 12 12" style="left:253px;top:433px"><circle cx="6" cy="6" r="5.2" fill="#fff"/><path d="M2.1 9.9 A5.5 5.5 0 0 1 9.9 2.1" fill="none" stroke="#8E8C80" stroke-width="1"/><path d="M3 9 A4.3 4.3 0 0 1 9 3" fill="none" stroke="#4A4942" stroke-width="1"/><path d="M9.9 2.1 A5.5 5.5 0 0 1 2.1 9.9" fill="none" stroke="#fff" stroke-width="1"/><path d="M9.1 2.9 A4.4 4.4 0 0 1 2.9 9.1" fill="none" stroke="#F2F0E6" stroke-width=".9"/></svg>
<span class="t" style="left:270.75px;top:431.75px;color:#000;font-family:'Liberation Sans', 'DejaVu Sans', sans-serif;font-size:12px;transform:scaleX(0.8902);-webkit-text-stroke:.3px #000;">Difference</span>
<svg width="12" height="12" viewBox="0 0 12 12" style="left:365px;top:408px"><circle cx="6" cy="6" r="5.2" fill="#fff"/><path d="M2.1 9.9 A5.5 5.5 0 0 1 9.9 2.1" fill="none" stroke="#8E8C80" stroke-width="1"/><path d="M3 9 A4.3 4.3 0 0 1 9 3" fill="none" stroke="#4A4942" stroke-width="1"/><path d="M9.9 2.1 A5.5 5.5 0 0 1 2.1 9.9" fill="none" stroke="#fff" stroke-width="1"/><path d="M9.1 2.9 A4.4 4.4 0 0 1 2.9 9.1" fill="none" stroke="#F2F0E6" stroke-width=".9"/><circle cx="6" cy="6" r="2" fill="#000"/></svg>
<span class="t" style="left:382.5px;top:406.75px;color:#000;font-family:'Liberation Sans', 'DejaVu Sans', sans-serif;font-size:12px;transform:scaleX(0.8547);-webkit-text-stroke:.3px #000;">Dir + Plus</span>
<svg width="12" height="12" viewBox="0 0 12 12" style="left:365px;top:431px"><circle cx="6" cy="6" r="5.2" fill="#fff"/><path d="M2.1 9.9 A5.5 5.5 0 0 1 9.9 2.1" fill="none" stroke="#8E8C80" stroke-width="1"/><path d="M3 9 A4.3 4.3 0 0 1 9 3" fill="none" stroke="#4A4942" stroke-width="1"/><path d="M9.9 2.1 A5.5 5.5 0 0 1 2.1 9.9" fill="none" stroke="#fff" stroke-width="1"/><path d="M9.1 2.9 A4.4 4.4 0 0 1 2.9 9.1" fill="none" stroke="#F2F0E6" stroke-width=".9"/></svg>
<span class="t" style="left:382.5px;top:429.75px;color:#000;font-family:'Liberation Sans', 'DejaVu Sans', sans-serif;font-size:12px;transform:scaleX(0.8758);-webkit-text-stroke:.3px #000;">DoublePlus</span>
<svg width="12" height="12" viewBox="0 0 12 12" style="left:257px;top:501px"><circle cx="6" cy="6" r="5.2" fill="#fff"/><path d="M2.1 9.9 A5.5 5.5 0 0 1 9.9 2.1" fill="none" stroke="#8E8C80" stroke-width="1"/><path d="M3 9 A4.3 4.3 0 0 1 9 3" fill="none" stroke="#4A4942" stroke-width="1"/><path d="M9.9 2.1 A5.5 5.5 0 0 1 2.1 9.9" fill="none" stroke="#fff" stroke-width="1"/><path d="M9.1 2.9 A4.4 4.4 0 0 1 2.9 9.1" fill="none" stroke="#F2F0E6" stroke-width=".9"/><circle cx="6" cy="6" r="2" fill="#000"/></svg>
<span class="t" style="left:274.75px;top:499.6px;color:#000;font-family:'Liberation Sans', 'DejaVu Sans', sans-serif;font-size:12px;transform:scaleX(0.8394);-webkit-text-stroke:.3px #000;">pos</span>
<svg width="12" height="12" viewBox="0 0 12 12" style="left:257px;top:524px"><circle cx="6" cy="6" r="5.2" fill="#fff"/><path d="M2.1 9.9 A5.5 5.5 0 0 1 9.9 2.1" fill="none" stroke="#8E8C80" stroke-width="1"/><path d="M3 9 A4.3 4.3 0 0 1 9 3" fill="none" stroke="#4A4942" stroke-width="1"/><path d="M9.9 2.1 A5.5 5.5 0 0 1 2.1 9.9" fill="none" stroke="#fff" stroke-width="1"/><path d="M9.1 2.9 A4.4 4.4 0 0 1 2.9 9.1" fill="none" stroke="#F2F0E6" stroke-width=".9"/></svg>
<span class="t" style="left:274.75px;top:522.5px;color:#000;font-family:'Liberation Sans', 'DejaVu Sans', sans-serif;font-size:12px;transform:scaleX(0.8736);-webkit-text-stroke:.3px #000;">neg</span>
<svg width="12" height="12" viewBox="0 0 12 12" style="left:371px;top:503px"><circle cx="6" cy="6" r="5.2" fill="#fff"/><path d="M2.1 9.9 A5.5 5.5 0 0 1 9.9 2.1" fill="none" stroke="#8E8C80" stroke-width="1"/><path d="M3 9 A4.3 4.3 0 0 1 9 3" fill="none" stroke="#4A4942" stroke-width="1"/><path d="M9.9 2.1 A5.5 5.5 0 0 1 2.1 9.9" fill="none" stroke="#fff" stroke-width="1"/><path d="M9.1 2.9 A4.4 4.4 0 0 1 2.9 9.1" fill="none" stroke="#F2F0E6" stroke-width=".9"/><circle cx="6" cy="6" r="2" fill="#000"/></svg>
<span class="t" style="left:388.75px;top:501.5px;color:#000;font-family:'Liberation Sans', 'DejaVu Sans', sans-serif;font-size:12px;transform:scaleX(0.8892);-webkit-text-stroke:.3px #000;">NonFreedback</span>
<svg width="12" height="12" viewBox="0 0 12 12" style="left:371px;top:525px"><circle cx="6" cy="6" r="5.2" fill="#fff"/><path d="M2.1 9.9 A5.5 5.5 0 0 1 9.9 2.1" fill="none" stroke="#8E8C80" stroke-width="1"/><path d="M3 9 A4.3 4.3 0 0 1 9 3" fill="none" stroke="#4A4942" stroke-width="1"/><path d="M9.9 2.1 A5.5 5.5 0 0 1 2.1 9.9" fill="none" stroke="#fff" stroke-width="1"/><path d="M9.1 2.9 A4.4 4.4 0 0 1 2.9 9.1" fill="none" stroke="#F2F0E6" stroke-width=".9"/></svg>
<span class="t" style="left:388.75px;top:523.75px;color:#000;font-family:'Liberation Sans', 'DejaVu Sans', sans-serif;font-size:12px;transform:scaleX(0.8818);-webkit-text-stroke:.3px #000;">Freedback</span>
<span class="t" style="left:498.6px;top:373.75px;color:#000;font-family:'Liberation Sans', 'DejaVu Sans', sans-serif;font-size:12px;transform:scaleX(0.8772);-webkit-text-stroke:.3px #000;">DriverMode</span>
<span class="t" style="left:496.5px;top:402.9px;color:#000;font-family:'Liberation Sans', 'DejaVu Sans', sans-serif;font-size:12px;transform:scaleX(0.8690);-webkit-text-stroke:.3px #000;">Movement Precision(um)</span>
<span class="t" style="left:497px;top:431.6px;color:#000;font-family:'Liberation Sans', 'DejaVu Sans', sans-serif;font-size:12px;transform:scaleX(0.8669);-webkit-text-stroke:.3px #000;">TestPrecision(um)</span>
<span class="t" style="left:496.5px;top:460px;color:#000;font-family:'Liberation Sans', 'DejaVu Sans', sans-serif;font-size:12px;transform:scaleX(0.8756);-webkit-text-stroke:.3px #000;">Most Speed(mm/s)</span>
<span class="t" style="left:496.5px;top:490.5px;color:#000;font-family:'Liberation Sans', 'DejaVu Sans', sans-serif;font-size:12px;transform:scaleX(0.8771);-webkit-text-stroke:.3px #000;">Stop Speed(mm/s)</span>
<span class="t" style="left:496.5px;top:519.4px;color:#000;font-family:'Liberation Sans', 'DejaVu Sans', sans-serif;font-size:12px;transform:scaleX(0.8853);-webkit-text-stroke:.3px #000;">Most_Acce(mm/s2)</span>
<span class="t" style="left:496.5px;top:548.4px;color:#000;font-family:'Liberation Sans', 'DejaVu Sans', sans-serif;font-size:12px;transform:scaleX(0.8623);-webkit-text-stroke:.3px #000;">MostSpace(mm)</span>
<div style="left:633px;top:370px;width:82px;height:22px;background:#fff;border:1px solid;border-color:#8F8D80 #fff #fff #8F8D80;box-shadow:inset 1px 1px 0 #56554C, inset -1px -1px 0 #E2DFD2"></div><span class="t" style="left:637px;top:371.9px;color:#000;font-family:'Liberation Sans', 'DejaVu Sans', sans-serif;font-size:12px;transform:scaleX(0.7477);-webkit-text-stroke:.3px #000;">0</span>
<div style="left:634px;top:400px;width:81px;height:21px;background:#fff;border:1px solid;border-color:#8F8D80 #fff #fff #8F8D80;box-shadow:inset 1px 1px 0 #56554C, inset -1px -1px 0 #E2DFD2"></div><span class="t" style="left:637.5px;top:400.8px;color:#000;font-family:'Liberation Sans', 'DejaVu Sans', sans-serif;font-size:12px;transform:scaleX(0.8961);-webkit-text-stroke:.3px #000;">25.00000000</span>
<div style="left:636px;top:429px;width:79px;height:21px;background:#fff;border:1px solid;border-color:#8F8D80 #fff #fff #8F8D80;box-shadow:inset 1px 1px 0 #56554C, inset -1px -1px 0 #E2DFD2"></div><span class="t" style="left:639.8px;top:429.6px;color:#000;font-family:'Liberation Sans', 'DejaVu Sans', sans-serif;font-size:12px;transform:scaleX(0.8863);-webkit-text-stroke:.3px #000;">5.00000000</span>
<div style="left:636px;top:459px;width:79px;height:21px;background:#fff;border:1px solid;border-color:#8F8D80 #fff #fff #8F8D80;box-shadow:inset 1px 1px 0 #56554C, inset -1px -1px 0 #E2DFD2"></div><span class="t" style="left:639.8px;top:459.6px;color:#000;font-family:'Liberation Sans', 'DejaVu Sans', sans-serif;font-size:12px;transform:scaleX(0.8929);-webkit-text-stroke:.3px #000;">500.0000</span>
<div style="left:636px;top:488px;width:79px;height:22px;background:#fff;border:1px solid;border-color:#8F8D80 #fff #fff #8F8D80;box-shadow:inset 1px 1px 0 #56554C, inset -1px -1px 0 #E2DFD2"></div><span class="t" style="left:639.8px;top:488.8px;color:#000;font-family:'Liberation Sans', 'DejaVu Sans', sans-serif;font-size:12px;transform:scaleX(0.8804);-webkit-text-stroke:.3px #000;">10.0000</span>
<div style="left:636px;top:517px;width:79px;height:22px;background:#fff;border:1px solid;border-color:#8F8D80 #fff #fff #8F8D80;box-shadow:inset 1px 1px 0 #56554C, inset -1px -1px 0 #E2DFD2"></div><span class="t" style="left:639.8px;top:517.6px;color:#000;font-family:'Liberation Sans', 'DejaVu Sans', sans-serif;font-size:12px;transform:scaleX(0.8848);-webkit-text-stroke:.3px #000;">1000.0000</span>
<div style="left:636px;top:546px;width:79px;height:22px;background:#fff;border:1px solid;border-color:#8F8D80 #fff #fff #8F8D80;box-shadow:inset 1px 1px 0 #56554C, inset -1px -1px 0 #E2DFD2"></div><span class="t" style="left:639.8px;top:546.3px;color:#000;font-family:'Liberation Sans', 'DejaVu Sans', sans-serif;font-size:12px;transform:scaleX(0.8829);-webkit-text-stroke:.3px #000;">500.0000</span>
<div style="left:0px;top:760px;width:1152px;height:2px;background:#fff"></div>
<div style="left:0px;top:762px;width:1152px;height:48px;background:#ECE9D8"></div>
<div style="left:1px;top:770px;width:30px;height:31px;background:#F6F5EE;border-top:1px solid #716F64;border-left:1px solid #716F64;border-right:1px solid #fff;border-bottom:1px solid #fff;box-shadow:inset 1px 1px 0 #000"></div>
<div style="left:12px;top:783px;width:14px;height:13px;background:#fff;border:1px solid #D8D5C8;border-right-color:#9d9a8c;border-bottom-color:#9d9a8c"></div>
<div style="left:5px;top:775px;width:13px;height:13px;background:#000;border:1px solid #F6F5EE;border-right-color:#9d9a8c;border-bottom-color:#9d9a8c"></div>
<div style="left:31px;top:769px;width:15px;height:15px;background:#000000;border-top:1px solid #716F64;border-left:1px solid #716F64;border-right:1px solid #fff;border-bottom:1px solid #fff;box-shadow:inset 1px 1px 0 #000"></div>
<div style="left:47px;top:769px;width:15px;height:15px;background:#808080;border-top:1px solid #716F64;border-left:1px solid #716F64;border-right:1px solid #fff;border-bottom:1px solid #fff;box-shadow:inset 1px 1px 0 #000"></div>
<div style="left:63px;top:769px;width:15px;height:15px;background:#800000;border-top:1px solid #716F64;border-left:1px solid #716F64;border-right:1px solid #fff;border-bottom:1px solid #fff;box-shadow:inset 1px 1px 0 #000"></div>
<div style="left:79px;top:769px;width:15px;height:15px;background:#808000;border-top:1px solid #716F64;border-left:1px solid #716F64;border-right:1px solid #fff;border-bottom:1px solid #fff;box-shadow:inset 1px 1px 0 #000"></div>
<div style="left:95px;top:769px;width:15px;height:15px;background:#008000;border-top:1px solid #716F64;border-left:1px solid #716F64;border-right:1px solid #fff;border-bottom:1px solid #fff;box-shadow:inset 1px 1px 0 #000"></div>
<div style="left:111px;top:769px;width:15px;height:15px;background:#008080;border-top:1px solid #716F64;border-left:1px solid #716F64;border-right:1px solid #fff;border-bottom:1px solid #fff;box-shadow:inset 1px 1px 0 #000"></div>
<div style="left:127px;top:769px;width:15px;height:15px;background:#000080;border-top:1px solid #716F64;border-left:1px solid #716F64;border-right:1px solid #fff;border-bottom:1px solid #fff;box-shadow:inset 1px 1px 0 #000"></div>
<div style="left:143px;top:769px;width:15px;height:15px;background:#800080;border-top:1px solid #716F64;border-left:1px solid #716F64;border-right:1px solid #fff;border-bottom:1px solid #fff;box-shadow:inset 1px 1px 0 #000"></div>
<div style="left:159px;top:769px;width:15px;height:15px;background:#808040;border-top:1px solid #716F64;border-left:1px solid #716F64;border-right:1px solid #fff;border-bottom:1px solid #fff;box-shadow:inset 1px 1px 0 #000"></div>
<div style="left:175px;top:769px;width:15px;height:15px;background:#004040;border-top:1px solid #716F64;border-left:1px solid #716F64;border-right:1px solid #fff;border-bottom:1px solid #fff;box-shadow:inset 1px 1px 0 #000"></div>
<div style="left:191px;top:769px;width:15px;height:15px;background:#0080FF;border-top:1px solid #716F64;border-left:1px solid #716F64;border-right:1px solid #fff;border-bottom:1px solid #fff;box-shadow:inset 1px 1px 0 #000"></div>
<div style="left:207px;top:769px;width:15px;height:15px;background:#004080;border-top:1px solid #716F64;border-left:1px solid #716F64;border-right:1px solid #fff;border-bottom:1px solid #fff;box-shadow:inset 1px 1px 0 #000"></div>
<div style="left:223px;top:769px;width:15px;height:15px;background:#8000FF;border-top:1px solid #716F64;border-left:1px solid #716F64;border-right:1px solid #fff;border-bottom:1px solid #fff;box-shadow:inset 1px 1px 0 #000"></div>
<div style="left:239px;top:769px;width:15px;height:15px;background:#804000;border-top:1px solid #716F64;border-left:1px solid #716F64;border-right:1px solid #fff;border-bottom:1px solid #fff;box-shadow:inset 1px 1px 0 #000"></div>
<div style="left:31px;top:785px;width:15px;height:15px;background:#FFFFFF;border-top:1px solid #716F64;border-left:1px solid #716F64;border-right:1px solid #fff;border-bottom:1px solid #fff;box-shadow:inset 1px 1px 0 #000"></div>
<div style="left:47px;top:785px;width:15px;height:15px;background:#C0C0C0;border-top:1px solid #716F64;border-left:1px solid #716F64;border-right:1px solid #fff;border-bottom:1px solid #fff;box-shadow:inset 1px 1px 0 #000"></div>
<div style="left:63px;top:785px;width:15px;height:15px;background:#FF0000;border-top:1px solid #716F64;border-left:1px solid #716F64;border-right:1px solid #fff;border-bottom:1px solid #fff;box-shadow:inset 1px 1px 0 #000"></div>
<div style="left:79px;top:785px;width:15px;height:15px;background:#FFFF00;border-top:1px solid #716F64;border-left:1px solid #716F64;border-right:1px solid #fff;border-bottom:1px solid #fff;box-shadow:inset 1px 1px 0 #000"></div>
<div style="left:95px;top:785px;width:15px;height:15px;background:#00FF00;border-top:1px solid #716F64;border-left:1px solid #716F64;border-right:1px solid #fff;border-bottom:1px solid #fff;box-shadow:inset 1px 1px 0 #000"></div>
<div style="left:111px;top:785px;width:15px;height:15px;background:#00FFFF;border-top:1px solid #716F64;border-left:1px solid #716F64;border-right:1px solid #fff;border-bottom:1px solid #fff;box-shadow:inset 1px 1px 0 #000"></div>
<div style="left:127px;top:785px;width:15px;height:15px;background:#0000FF;border-top:1px solid #716F64;border-left:1px solid #716F64;border-right:1px solid #fff;border-bottom:1px solid #fff;box-shadow:inset 1px 1px 0 #000"></div>
<div style="left:143px;top:785px;width:15px;height:15px;background:#FF00FF;border-top:1px solid #716F64;border-left:1px solid #716F64;border-right:1px solid #fff;border-bottom:1px solid #fff;box-shadow:inset 1px 1px 0 #000"></div>
<div style="left:159px;top:785px;width:15px;height:15px;background:#FFFF80;border-top:1px solid #716F64;border-left:1px solid #716F64;border-right:1px solid #fff;border-bottom:1px solid #fff;box-shadow:inset 1px 1px 0 #000"></div>
<div style="left:175px;top:785px;width:15px;height:15px;background:#00FF80;border-top:1px solid #716F64;border-left:1px solid #716F64;border-right:1px solid #fff;border-bottom:1px solid #fff;box-shadow:inset 1px 1px 0 #000"></div>
<div style="left:191px;top:785px;width:15px;height:15px;background:#80FFFF;border-top:1px solid #716F64;border-left:1px solid #716F64;border-right:1px solid #fff;border-bottom:1px solid #fff;box-shadow:inset 1px 1px 0 #000"></div>
<div style="left:207px;top:785px;width:15px;height:15px;background:#8080FF;border-top:1px solid #716F64;border-left:1px solid #716F64;border-right:1px solid #fff;border-bottom:1px solid #fff;box-shadow:inset 1px 1px 0 #000"></div>
<div style="left:223px;top:785px;width:15px;height:15px;background:#FF0080;border-top:1px solid #716F64;border-left:1px solid #716F64;border-right:1px solid #fff;border-bottom:1px solid #fff;box-shadow:inset 1px 1px 0 #000"></div>
<div style="left:239px;top:785px;width:15px;height:15px;background:#FF8040;border-top:1px solid #716F64;border-left:1px solid #716F64;border-right:1px solid #fff;border-bottom:1px solid #fff;box-shadow:inset 1px 1px 0 #000"></div>
<div style="left:0px;top:810px;width:1152px;height:1px;background:#ACA899"></div>
<div style="left:0px;top:811px;width:1152px;height:1px;background:#fff"></div>
<div style="left:0px;top:812px;width:1152px;height:22px;background:#ECE9D8"></div><span class="t" style="left:2px;top:815.6px;color:#000;font-family:'Liberation Sans', 'DejaVu Sans', sans-serif;font-size:11px;">Для получения справки выберите команду &quot;Вызов справки&quot; из меню &quot;Справка&quot;.</span>
<div style="left:912px;top:814px;width:1px;height:19px;background:#C5C2B2"></div>
<div style="left:913px;top:814px;width:1px;height:19px;background:#fff"></div>
<div style="left:1031px;top:814px;width:1px;height:19px;background:#C5C2B2"></div>
<div style="left:1032px;top:814px;width:1px;height:19px;background:#fff"></div>
<div style="left:1149px;top:814px;width:1px;height:19px;background:#C5C2B2"></div>
<div style="left:1150px;top:814px;width:1px;height:19px;background:#fff"></div>
<div style="left:0px;top:832px;width:1152px;height:1px;background:#E6DCD0"></div>
<div style="left:0px;top:833px;width:1152px;height:1px;background:#E4E4F2"></div>
<div style="left:0px;top:834px;width:1152px;height:30px;background:linear-gradient(to bottom,#2860B8 0,#2860B8 3%,#4090F0 5%,#4090F0 9%,#3072DA 13%,#2058D8 20%,#1C58D0 30%,#2852D8 37%,#2560D8 45%,#2560D8 70%,#2862E0 80%,#2A60D8 90%,#1848B8 98%,#1848B8 100%)"></div>
<div style="left:0px;top:834px;width:96px;height:30px;border-radius:0 5px 4px 0/0 11px 16px 0;background:linear-gradient(to bottom,#2A7A2A 0,#2A7A2A 3%,#5CB45C 6%,#58AE58 13%,#3E9C3E 20%,#3A983A 40%,#40A240 60%,#42A642 85%,#349034 96%,#2C802C 100%);box-shadow:inset -4px 0 4px rgba(20,80,10,.5), inset 2px 0 3px rgba(10,60,10,.3), 1px 0 2px rgba(0,0,60,.4)"></div><svg width="19" height="19" viewBox="0 0 19 19" style="left:11px;top:839px"><path d="M1.5 3.5 Q5 1.5 8.5 3.5 L7.5 9.5 Q4 7.8 0.8 9.5 Z" fill="#E8552A"/><path d="M10 4 Q13.5 5.5 17.5 3.5 L16.3 9.5 Q12.5 11.5 9 9.8 Z" fill="#6DC04A"/><path d="M0.6 10.8 Q4 9 7.3 10.8 L6.3 16.8 Q3 15 -.2 16.8 Z" fill="#4A7CE8"/><path d="M8.8 11.2 Q12.3 12.8 16 11 L15 17 Q11.5 18.8 7.8 17.2 Z" fill="#F5C63A"/></svg>
<span class="t" style="left:34.8px;top:840.9px;color:#fff;font-family:'Liberation Sans', 'DejaVu Sans', sans-serif;font-size:17.5px;font-weight:bold;font-style:italic;transform:scaleX(0.9275);text-shadow:1px 1px 1px rgba(0,40,0,.6);">пуск</span>
<svg width="17" height="15" viewBox="0 0 17 15" style="left:107px;top:841px"><ellipse cx="8.5" cy="8" rx="5.4" ry="5.2" fill="none" stroke="#4A96EA" stroke-width="2.8"/><path d="M3.5 8 H13.5" stroke="#4A96EA" stroke-width="2.2"/><path d="M1 13 Q7 -1.5 16 2" fill="none" stroke="#8CC6F6" stroke-width="1.3"/><rect x="9.8" y="9.2" width="5.4" height="3" fill="#2A62DA"/></svg>
<svg width="15" height="15" viewBox="0 0 15 15" style="left:130.5px;top:840.5px"><circle cx="7.5" cy="7.5" r="7.3" fill="#F2F2F2"/><path d="M7.5 .2 A7.3 7.3 0 0 1 14.8 7.5 L7.5 7.5 Z" fill="#58A834"/><path d="M14.8 7.5 A7.3 7.3 0 0 1 7.5 14.8 L7.5 7.5 Z" fill="#E8CC3C"/><path d="M7.5 14.8 A7.3 7.3 0 0 1 .2 7.5 L7.5 7.5 Z" fill="#F0E8E0"/><path d="M.2 7.5 A7.3 7.3 0 0 1 7.5 .2 L7.5 7.5 Z" fill="#E46030"/><circle cx="7.5" cy="7.5" r="4.2" fill="#F6F6FA"/><path d="M5.8 4.8 L10.4 7.5 L5.8 10.2 Z" fill="#20204A"/></svg>
<svg width="15" height="14" viewBox="0 0 15 14" style="left:154px;top:841px"><rect x="1" y="1" width="11.5" height="12" rx="2.5" fill="#EEF4FF" stroke="#7FB2F4" stroke-width="1.4"/><path d="M9 4.2 Q4 3.2 4 7 Q4 10.8 9 9.8" fill="none" stroke="#28406C" stroke-width="1.6"/><path d="M7 8 L13.5 4.5" stroke="#B03030" stroke-width="1.3"/><path d="M6 8.5 L8 7.4" stroke="#202020" stroke-width="1.4"/></svg>
<div style="left:181px;top:838px;width:158px;height:22px;background:linear-gradient(to bottom,#5E9BF8 0,#3F86F4 14%,#3A80F2 70%,#3578EA 100%);border:1px solid #2F6FE0;border-radius:3px;box-shadow:inset 1px 1px 0 rgba(255,255,255,.25)"></div>
<div style="left:341px;top:838px;width:158px;height:22px;background:linear-gradient(to bottom,#5E9BF8 0,#3F86F4 14%,#3A80F2 70%,#3578EA 100%);border:1px solid #2F6FE0;border-radius:3px;box-shadow:inset 1px 1px 0 rgba(255,255,255,.25)"></div>
<div style="left:501px;top:838px;width:158px;height:22px;background:linear-gradient(to bottom,#1A48A8 0,#1E52B7 20%,#1F56BE 100%);border:1px solid #16409A;border-radius:3px;box-shadow:inset 1px 1px 1px rgba(0,0,40,.35)"></div>
<div style="left:661px;top:838px;width:158px;height:22px;background:linear-gradient(to bottom,#5E9BF8 0,#3F86F4 14%,#3A80F2 70%,#3578EA 100%);border:1px solid #2F6FE0;border-radius:3px;box-shadow:inset 1px 1px 0 rgba(255,255,255,.25)"></div><svg width="15" height="13" viewBox="0 0 15 13" style="left:190px;top:842px"><path d="M.8 1.6 Q.8 .8 1.8 .8 H5.2 L6.6 2.6 H13.4 Q14.2 2.6 14.2 3.4 V11.4 H.8 Z" fill="#F3D768" stroke="#BC982C" stroke-width="1"/><path d="M.8 4.8 H14.2 V11.4 H.8 Z" fill="#FBEA8E" stroke="#BC982C" stroke-width="1"/></svg>
<span class="t" style="left:209.5px;top:841px;color:#fff;font-family:'Liberation Sans', 'DejaVu Sans', sans-serif;font-size:11px;transform:scaleX(0.9452);">Параметры HALK-90</span>
<svg width="16" height="16" viewBox="0 0 16 16" style="left:350px;top:841px"><rect x=".7" y=".7" width="14.6" height="14.6" fill="#8E9AA6" stroke="#E8EEF4" stroke-width="1.4"/><path d="M4 4 L13 3 L12 9 L9 13 L3 12 Z" fill="#F6F8FA"/><path d="M3 9 L8 7 L9 13 L3 12 Z" fill="#D2D8E0"/></svg>
<span class="t" style="left:369px;top:841px;color:#fff;font-family:'Liberation Sans', 'DejaVu Sans', sans-serif;font-size:11px;transform:scaleX(0.9859);">CorelDRAW 12 - [Gra...</span>
<svg width="17" height="17" viewBox="0 0 16 16" style="left:511px;top:841px"><rect width="16" height="16" fill="#1A10C4"/><path d="M4.5 2 H11.5 L16 14 V16 H0 V14 Z" fill="#0E0658" opacity=".55"/><rect y="10.6" width="16" height="5.4" fill="#12001E" opacity=".92"/><path d="M0 10.5 L2.5 12 L0 14 Z" fill="#C040D0" opacity=".8"/><path d="M8 3.5 V12" stroke="#B01060" stroke-width="1.7"/><path d="M6.2 4.5 L7.6 7" stroke="#8A1030" stroke-width="1.4"/><path d="M8.3 11.5 V14.2" stroke="#C86410" stroke-width="1.1"/><g fill="#FFE6FF"><rect x="5" y="1.7" width="6" height="1.7"/><rect x="6.6" y=".9" width="2.9" height="3.3"/><rect x="1" y="8.7" width="6" height="1.7"/><rect x="2.5" y="7.8" width="2.9" height="3.4"/><rect x="9.1" y="8.7" width="6" height="1.7"/><rect x="10.6" y="7.8" width="2.9" height="3.4"/></g><rect x="5" y="4" width="1.2" height="1.2" fill="#FFE4C8"/><rect x="6.1" y="5.3" width="1.2" height="1.2" fill="#FFD890"/><g fill="#fff"><rect x="0" y="15" width="2" height="1"/><rect x="6" y="15" width="4" height="1"/><rect x="14" y="15" width="2" height="1"/></g></svg>
<span class="t" style="left:531px;top:841px;color:#fff;font-family:'Liberation Sans', 'DejaVu Sans', sans-serif;font-size:11px;transform:scaleX(0.9539);">_MachineSetting_</span>
<svg width="11.4" height="16.15" viewBox="0 0 12 17" style="left:672px;top:839px"><path d="M0.5 5 H11.5 L9.8 15.5 Q6.5 17.2 3.6 15.5 Z" fill="#5A6A9A"/><path d="M1.2 0.8 Q2.2 -.4 2.8 1 L3.6 7.5 H1.6 Z" fill="#B8682C"/><path d="M1.6 4.6 H3.2 L3.6 8.5 H2 Z" fill="#E8E0E8"/><path d="M3.4 2.5 L4.8 2.5 L5 12 L3.6 12 Z" fill="#1E3060"/><path d="M5 3 Q6 1.5 7 3 L7.4 13.5 H4.8 Z" fill="#F2B040"/><path d="M5.2 3.2 Q6 2 6.8 3.2 L6.9 5.5 H5.2 Z" fill="#F0B8A0"/><path d="M8.6 3 Q9.6 1.8 10.4 3.2 L10 11 H8.4 Z" fill="#B04826"/><path d="M8.7 3.2 Q9.6 2 10.3 3.3 L10.2 5.6 H8.6 Z" fill="#F0C8D0"/><path d="M10.5 4 L11.5 4.5 L10.5 12.5 L9.8 12.5 Z" fill="#202858"/><path d="M2 9.5 L4.6 10 L4.8 15 L3.4 14.6 Z" fill="#9CB070"/><path d="M5 10 H9 L8.6 15 H5.2 Z" fill="#E8B868"/><path d="M8.6 9 L9.8 9 L9.4 14.5 L8.4 14.5 Z" fill="#F4F0F0"/><path d="M3.6 15 Q6.5 16.4 9.6 15 L9.4 16 Q6.5 17.4 3.8 16 Z" fill="#28303C"/><path d="M4.6 14.2 Q6.4 13.4 8 14.2 L8 15.2 Q6.4 15.8 4.6 15.2 Z" fill="#F0F0D0"/></svg>
<span class="t" style="left:689px;top:841px;color:#fff;font-family:'Liberation Sans', 'DejaVu Sans', sans-serif;font-size:11px;transform:scaleX(0.9640);">Безымянный - Paint</span>
<div style="left:1095px;top:834px;width:57px;height:30px;background:linear-gradient(to bottom,#1385D8 0,#3DB4F4 5%,#1B9CEE 14%,#1290E8 50%,#108AE2 85%,#0E72C4 100%);box-shadow:inset 1px 0 0 #12389A"></div><span class="t" style="left:1069px;top:841px;color:#fff;font-family:'Liberation Sans', 'DejaVu Sans', sans-serif;font-size:11px;transform:scaleX(0.8889);">RL</span>
<svg width="18" height="18" viewBox="0 0 18 18" style="left:1086.6px;top:840.5px"><defs><linearGradient id="trg" x1="0" y1="0" x2="1" y2="1"><stop offset="0" stop-color="#6CBCFC"/><stop offset=".45" stop-color="#2E84F0"/><stop offset="1" stop-color="#1658DC"/></linearGradient></defs><circle cx="9" cy="9" r="8.4" fill="url(#trg)"/><path d="M3.1 14.9 A8.4 8.4 0 0 1 14.9 3.1" fill="none" stroke="#163A9C" stroke-width="1.1"/><path d="M14.9 3.1 A8.4 8.4 0 0 1 3.1 14.9" fill="none" stroke="#6CB8FA" stroke-width="1.1"/><path d="M11.2 4.8 L6.6 9.2 L11.2 13.6" fill="none" stroke="#fff" stroke-width="2.3"/></svg>
<span class="t" style="left:1111px;top:841px;color:#fff;font-family:'Liberation Sans', 'DejaVu Sans', sans-serif;font-size:11px;">15:58</span>
</div>
</body></html>
